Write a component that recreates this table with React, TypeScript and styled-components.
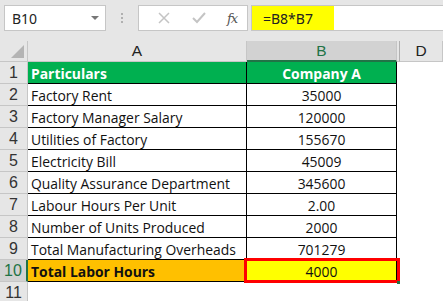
import React from "react";
import styled, { createGlobalStyle } from "styled-components";

const Global = createGlobalStyle`
  html, body { margin: 0; padding: 0; background: #ffffff; }
  body { font-family: "Open Sans", "Noto Sans", Arial, sans-serif; overflow: hidden; }
`;

const Page = styled.div`
  width: 443px;
  height: 301px;
  overflow: hidden;
  background: #ffffff;
`;

const TopBar = styled.div`
  height: 41px;
  background: #e6e6e6;
  display: flex;
  align-items: flex-start;
  padding: 5px 0 0 4px;
  box-sizing: border-box;
`;

const NameBox = styled.div`
  width: 102px;
  height: 26px;
  box-sizing: border-box;
  background: #fff;
  border: 1px solid #c6c6c6;
  display: flex;
  align-items: center;
  justify-content: space-between;
  padding: 0 6px 0 7px;
  font-family: "Noto Sans", Arial, sans-serif;
  font-size: 14px;
  color: #222;
`;

const Caret = styled.span`
  width: 0;
  height: 0;
  border-left: 4px solid transparent;
  border-right: 4px solid transparent;
  border-top: 4px solid #777;
`;

const Dots = styled.div`
  width: 32px;
  height: 26px;
  display: flex;
  flex-direction: column;
  align-items: center;
  justify-content: center;
  gap: 2px;
  span { width: 2px; height: 2px; background: #b0b0b0; }
`;

const FxBox = styled.div`
  width: 110px;
  height: 26px;
  box-sizing: border-box;
  background: #fff;
  border: 1px solid #c6c6c6;
  display: flex;
  align-items: center;
  padding: 0 0 0 18px;
  gap: 20px;
`;

const FxText = styled.span`
  font-family: "DejaVu Serif", "Liberation Serif", serif;
  font-style: italic;
  font-size: 13px;
  color: #555;
  margin-left: 0;
  letter-spacing: -1px;
`;

const Formula = styled.div`
  flex: 1;
  margin-left: 3px;
  height: 26px;
  box-sizing: border-box;
  background: #fff;
  border: 1px solid #c6c6c6;
  border-right: none;
  display: flex;
`;

const FormulaText = styled.div`
  width: 82px;
  background: #ffff00;
  font-family: "Noto Sans", Arial, sans-serif;
  font-size: 14px;
  color: #222;
  display: flex;
  align-items: center;
  padding-left: 11px;
  box-sizing: border-box;
`;

const HeaderRow = styled.div`
  height: 21px;
  display: flex;
  background: #e6e6e6;
`;

const Corner = styled.div`
  width: 28px;
  box-sizing: border-box;
  border-right: 1px solid #c6c6c6;
  border-bottom: 1px solid #c6c6c6;
  position: relative;
  &::after {
    content: "";
    position: absolute;
    right: 3px;
    bottom: 3px;
    width: 0;
    height: 0;
    border-left: 13px solid transparent;
    border-bottom: 13px solid #b4b4b4;
  }
`;

const ColHead = styled.div<{ $w: number; $sel?: boolean }>`
  width: ${(p) => p.$w}px;
  flex: ${(p) => (p.$w ? "none" : "1")};
  box-sizing: border-box;
  background: ${(p) => (p.$sel ? "#d2d2d2" : "#e6e6e6")};
  border-right: 1px solid #c6c6c6;
  border-bottom: ${(p) => (p.$sel ? "2px solid #217346" : "1px solid #c6c6c6")};
  display: flex;
  align-items: center;
  justify-content: center;
  font-family: "Liberation Sans", Arial, sans-serif;
  font-size: 15.5px;
  color: ${(p) => (p.$sel ? "#217346" : "#222")};
  padding-top: ${(p) => (p.$sel ? "1px" : "0")};
`;

const HiddenMark = styled.div`
  width: 3px;
  box-sizing: border-box;
  background: #e6e6e6;
  border-right: 1px solid #b0b0b0;
  border-bottom: 1px solid #c6c6c6;
`;

const Row = styled.div<{ $h?: number }>`
  height: ${(p) => p.$h ?? 22}px;
  display: flex;
`;

const RowHead = styled.div<{ $sel?: boolean }>`
  width: 28px;
  box-sizing: border-box;
  background: ${(p) => (p.$sel ? "#d2d2d2" : "#e6e6e6")};
  border-right: ${(p) => (p.$sel ? "2px solid #217346" : "1px solid #c6c6c6")};
  border-bottom: 1px solid #c6c6c6;
  display: flex;
  align-items: center;
  justify-content: center;
  font-family: "Liberation Sans", Arial, sans-serif;
  font-size: 16px;
  color: ${(p) => (p.$sel ? "#217346" : "#333")};
`;

type Fill = "none" | "green" | "orange" | "yellow";
const fills: Record<Fill, string> = {
  none: "#ffffff",
  green: "#00b050",
  orange: "#ffc000",
  yellow: "#ffff00",
};

const Cell = styled.div<{ $w: number; $fill: Fill; $bold?: boolean; $center?: boolean; $white?: boolean }>`
  width: ${(p) => p.$w}px;
  box-sizing: border-box;
  background: ${(p) => fills[p.$fill]};
  border-right: 1px solid #000;
  border-bottom: 1px solid #000;
  display: flex;
  align-items: center;
  justify-content: ${(p) => (p.$center ? "center" : "flex-start")};
  padding-left: ${(p) => (p.$center ? "0" : "3px")};
  padding-top: 1px;
  font-family: "Open Sans", "Noto Sans", Arial, sans-serif;
  font-size: 13.9px;
  font-weight: ${(p) => (p.$bold ? 700 : 400)};
  color: ${(p) => (p.$white ? "#ffffff" : "#111")};
  white-space: nowrap;
  overflow: visible;
  position: relative;
`;

const Blank = styled.div`
  flex: 1;
  background: #fff;
`;

const Selection = styled.div`
  position: absolute;
  left: -3px;
  right: -4px;
  top: -2px;
  bottom: -2px;
  border: 3px solid #ff0000;
  pointer-events: none;
`;

const Handle = styled.div`
  position: absolute;
  right: -4px;
  bottom: -3px;
  width: 3px;
  height: 3px;
  background: #217346;
`;

const data: [string, string][] = [
  ["Factory Rent", "35000"],
  ["Factory Manager Salary", "120000"],
  ["Utilities of Factory", "155670"],
  ["Electricity Bill", "45009"],
  ["Quality Assurance Department", "345600"],
  ["Labour Hours Per Unit", "2.00"],
  ["Number of Units Produced", "2000"],
  ["Total Manufacturing Overheads", "701279"],
];

export default function App() {
  return (
    <Page>
      <Global />
      <TopBar>
        <NameBox>
          <span>B10</span>
          <Caret />
        </NameBox>
        <Dots>
          <span />
          <span />
          <span />
        </Dots>
        <FxBox>
          <svg width="14" height="14" viewBox="0 0 14 14">
            <path d="M2 2 L12 12 M12 2 L2 12" stroke="#c4c4c4" strokeWidth="1.5" fill="none" />
          </svg>
          <svg width="16" height="14" viewBox="0 0 16 14">
            <path d="M2 7 L6 11 L14 2" stroke="#c4c4c4" strokeWidth="2" fill="none" />
          </svg>
          <FxText>fx</FxText>
        </FxBox>
        <Formula>
          <FormulaText>=B8*B7</FormulaText>
        </Formula>
      </TopBar>
      <HeaderRow>
        <Corner />
        <ColHead $w={219}>A</ColHead>
        <ColHead $w={150} $sel>
          B
        </ColHead>
        <HiddenMark />
        <ColHead $w={0}>D</ColHead>
      </HeaderRow>
      <Row>
        <RowHead>1</RowHead>
        <Cell $w={219} $fill="green" $bold $white>
          Particulars
        </Cell>
        <Cell $w={150} $fill="green" $bold $white $center>
          Company A
        </Cell>
        <Blank />
      </Row>
      {data.map(([label, value], i) => (
        <Row key={label}>
          <RowHead>{i + 2}</RowHead>
          <Cell $w={219} $fill="none">
            {label}
          </Cell>
          <Cell $w={150} $fill="none" $center>
            {value}
          </Cell>
          <Blank />
        </Row>
      ))}
      <Row>
        <RowHead $sel>10</RowHead>
        <Cell $w={219} $fill="orange" $bold>
          Total Labor Hours
        </Cell>
        <Cell $w={150} $fill="yellow" $center>
          4000
          <Selection />
          <Handle />
        </Cell>
        <Blank />
      </Row>
      <Row $h={22}>
        <RowHead>11</RowHead>
        <Blank />
      </Row>
    </Page>
  );
}
